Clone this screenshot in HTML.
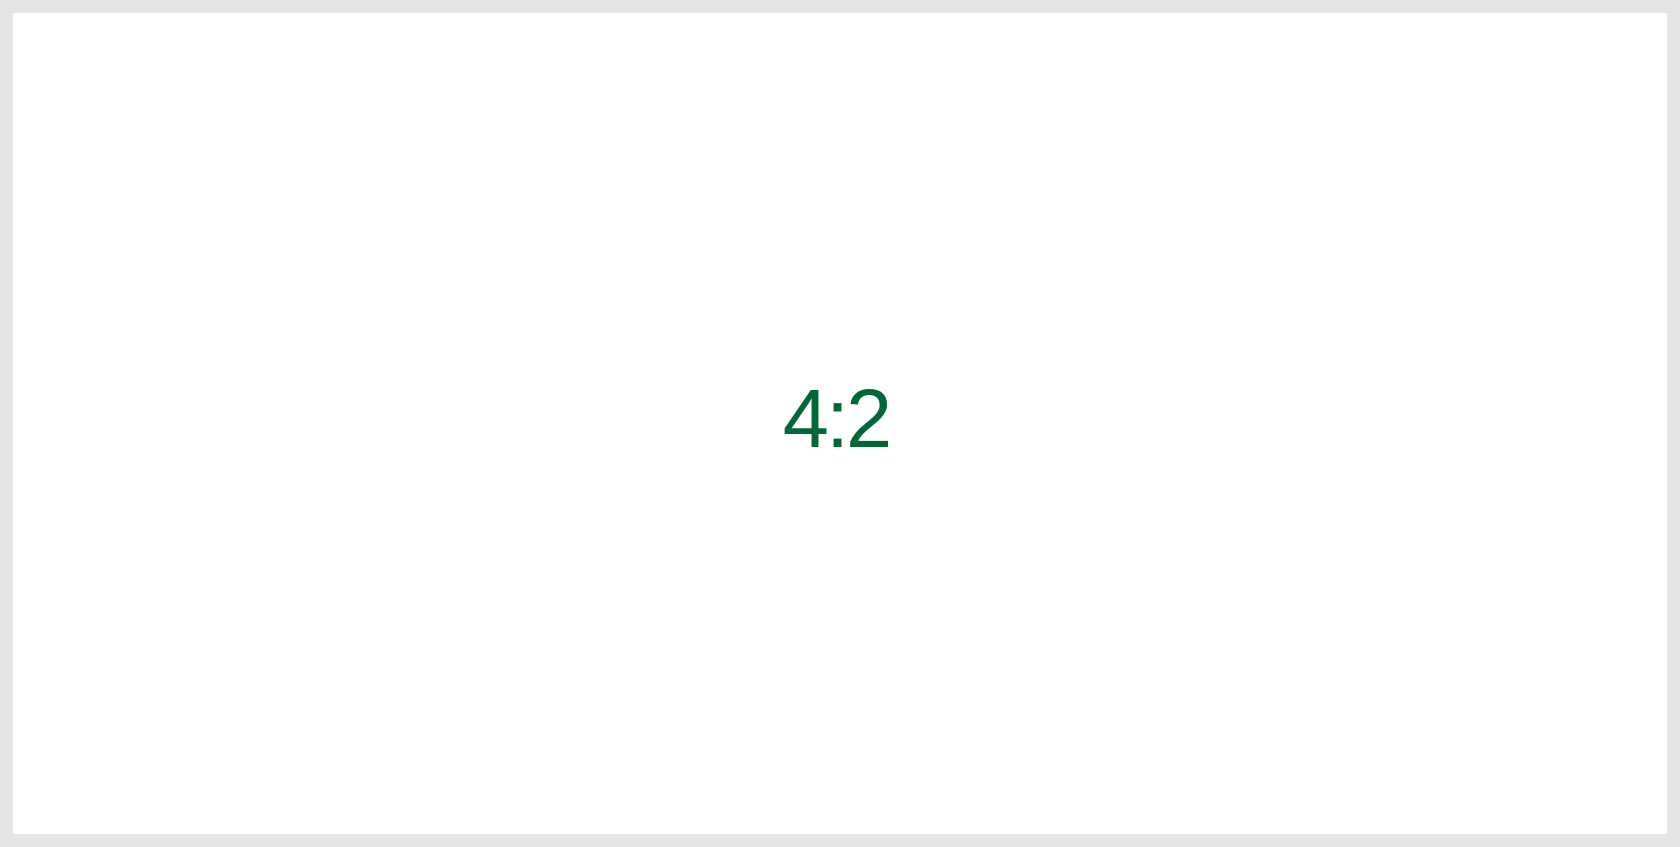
<!DOCTYPE html>
<html><head><style>
html,body{margin:0;padding:0;}
body{width:1680px;height:847px;background:#fff;position:relative;overflow:hidden;}
.frame{position:absolute;left:0;top:0;width:1654px;height:821px;border:13px solid #e5e5e5;}
.t{position:absolute;left:0;width:1672px;top:371px;text-align:center;font-family:"Liberation Sans",sans-serif;font-size:83px;line-height:96px;color:#006837;letter-spacing:-3px;}
</style></head><body>
<div class="frame"></div>
<div class="t">4:2</div>
</body></html>
